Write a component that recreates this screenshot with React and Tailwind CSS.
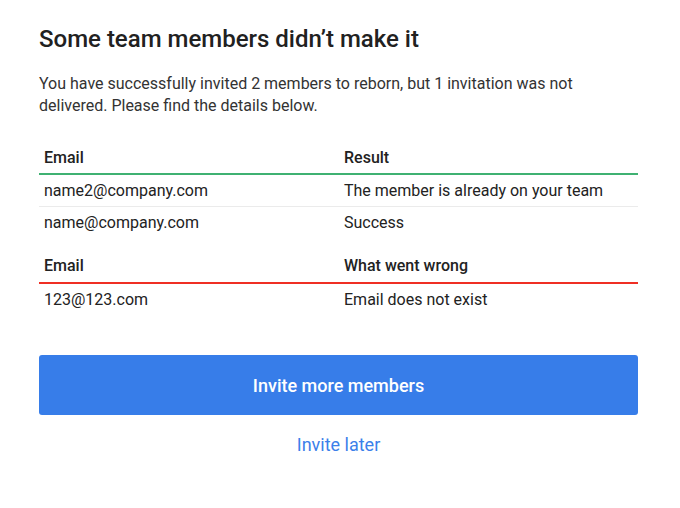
export default function App() {
    const ok = [
        ["name2@company.com", "The member is already on your team"],
        ["name@company.com", "Success"],
    ];
    const failed = [["123@123.com", "Email does not exist"]];

    return (
        <div className="min-h-screen bg-white pl-[39px] pr-[42px] pt-[25px] text-[#222]" style={{ fontFamily: "Roboto, 'Noto Sans', sans-serif" }}>
            <h1 className="text-[24px] leading-[28px] font-medium text-[#212121]">Some team members didn’t make it</h1>
            <p className="mt-[20px] text-[16px] leading-[22px] text-[#333]">
                You have successfully invited 2 members to reborn, but 1 invitation was not delivered. Please find the details below.
            </p>

            {/* delivered */}
            <div className="mt-[26px] text-[16px]">
                <div className="grid grid-cols-[300px_1fr] h-[32px] items-center border-b-2 border-[#3fb172] font-medium">
                    <div className="pl-[5px]">Email</div>
                    <div className="pl-[5px]">Result</div>
                </div>
                {ok.map(([email, res], i) => (
                    <div key={email} className={"grid grid-cols-[300px_1fr] h-[32px] items-center " + (i === 0 ? "border-b border-[#ebebeb]" : "")}>
                        <div className="pl-[5px]">{email}</div>
                        <div className="pl-[5px]">{res}</div>
                    </div>
                ))}
            </div>

            {/* failed */}
            <div className="mt-[11px] text-[16px]">
                <div className="grid grid-cols-[300px_1fr] h-[34px] items-center border-b-2 border-[#ef2f24] font-medium">
                    <div className="pl-[5px]">Email</div>
                    <div className="pl-[5px]">What went wrong</div>
                </div>
                {failed.map(([email, res]) => (
                    <div key={email} className="grid grid-cols-[300px_1fr] h-[32px] items-center">
                        <div className="pl-[5px]">{email}</div>
                        <div className="pl-[5px]">{res}</div>
                    </div>
                ))}
            </div>

            <button className="mt-[39px] w-full h-[60px] rounded-[3px] bg-[#377de9] text-white text-[18px] font-medium">
                Invite more members
            </button>
            <div className="mt-[18px] text-center">
                <a href="#" className="text-[18px] leading-[24px] text-[#3b80ea]">Invite later</a>
            </div>
        </div>
    );
}
